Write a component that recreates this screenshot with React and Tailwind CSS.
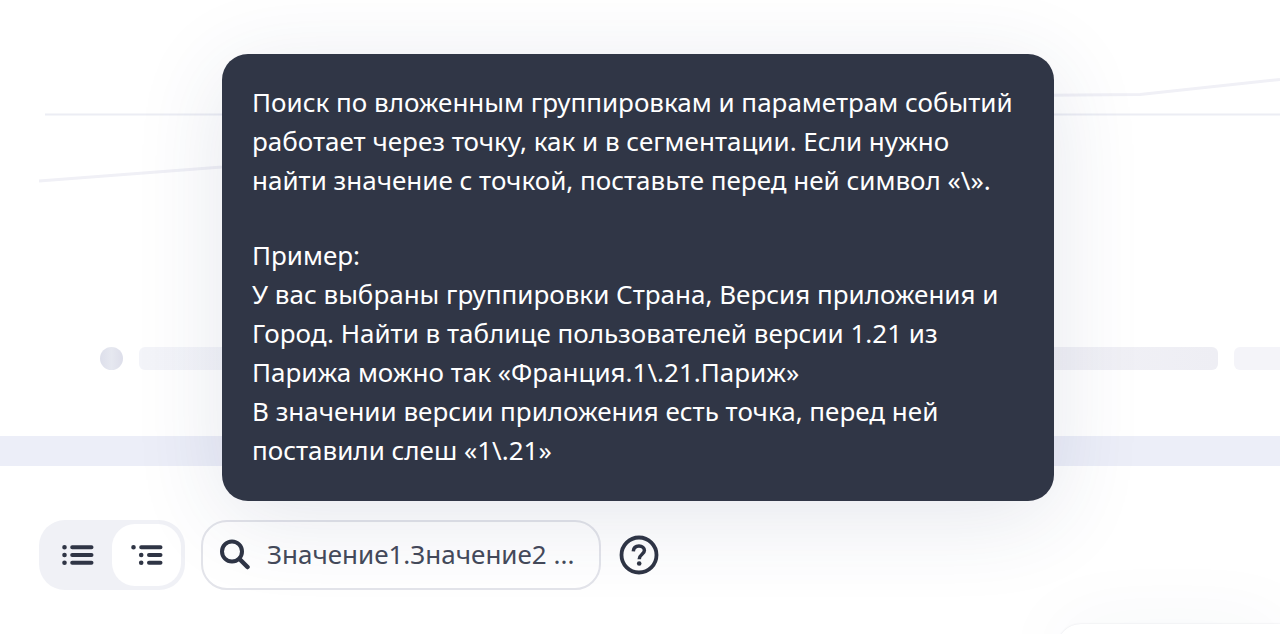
import React, { useState } from "react";

function Chart() {
  return (
    <svg className="block h-[347px] w-full" viewBox="0 0 1280 347" preserveAspectRatio="none" fill="none" aria-hidden="true">
      <path d="M45 114.5H1280" stroke="#ecedf4" strokeWidth="2" />
      <path d="M39 181L222 167L640 120L1000 95.5L1140 94.5L1280 79.5" stroke="#f0f0f6" strokeWidth="3" strokeLinejoin="round" />
    </svg>
  );
}

function Legend() {
  return (
    <div className="flex h-[23px] gap-4 pl-[100px]" aria-hidden="true">
      <span className="w-[23px] shrink-0 rounded-full bg-linear-to-r from-[#dddfeb] via-[#e6e8f0] to-[#dddeea]" />
      <span className="flex-1 rounded-md bg-linear-to-r from-[#f3f4f9] via-[#f9f9fc] to-[#eeeef4]" />
      <span className="w-[46px] shrink-0 rounded-l-md bg-[#f4f4f9]" />
    </div>
  );
}

function FlatListIcon() {
  return (
    <svg width="32" height="22" viewBox="0 0 32 22" fill="none" stroke="#2f3545" strokeWidth="4" strokeLinecap="round" aria-hidden="true">
      <path d="M2.500 3.200h.01M2.500 11h.01M2.500 18.800h.01" strokeWidth="4.600" />
      <path d="M10.200 3.200h19.300M10.200 11h19.300M10.200 18.800h19.300" />
    </svg>
  );
}

function TreeListIcon() {
  return (
    <svg width="32" height="22" viewBox="0 0 32 22" fill="none" stroke="#2f3545" strokeWidth="4" strokeLinecap="round" aria-hidden="true">
      <path d="M2.500 3.200h.01M10.200 11h.01M10.200 18.800h.01" strokeWidth="4.600" />
      <path d="M10.200 3.200h19.300M18 11h11.500M18 18.800h11.500" />
    </svg>
  );
}

function ViewSwitch() {
  const [view, setView] = useState("tree");
  const base = "flex flex-1 items-center justify-center rounded-[23px]";
  return (
    <div className="flex h-[70px] w-[146px] shrink-0 rounded-[26px] bg-[#f0f1f6] p-1">
      <button type="button" aria-label="Список" aria-pressed={view === "flat"} onClick={() => setView("flat")} className={base + (view === "flat" ? " bg-white" : "")}>
        <FlatListIcon />
      </button>
      <button type="button" aria-label="Дерево" aria-pressed={view === "tree"} onClick={() => setView("tree")} className={base + (view === "tree" ? " bg-white" : "")}>
        <TreeListIcon />
      </button>
    </div>
  );
}

function Search() {
  return (
    <label className="flex h-[70px] w-[400px] items-center gap-4 rounded-[26px] border-2 border-[#e3e4ea] px-4 pb-[2px]">
      <svg className="shrink-0" width="32" height="32" viewBox="0 0 32 32" fill="none" stroke="#2f3545" strokeWidth="4" aria-hidden="true">
        <circle cx="13" cy="13.500" r="10" />
        <path d="M20.500 21L28.500 29" strokeWidth="4.500" strokeLinecap="round" />
      </svg>
      <input type="text" aria-label="Поиск" placeholder="Значение1.Значение2 ..." className="w-full min-w-0 bg-transparent text-[26px] text-[#454a5a] outline-none placeholder:text-[#454a5a]" />
    </label>
  );
}

function Tooltip() {
  return (
    <div
      id="search-hint"
      role="tooltip"
      className="absolute top-[54px] left-[222px] flex w-[832px] flex-col gap-9 rounded-[26px] bg-[#303646] px-[30px] pt-[29px] pb-[31px] text-[26px] leading-[39px] font-normal whitespace-nowrap text-white shadow-[0_16px_90px_rgba(40,60,110,0.12)]"
    >
      <p>
        Поиск по вложенным группировкам и параметрам событий
        <br />
        работает через точку, как и в сегментации. Если нужно
        <br />
        найти значение с точкой, поставьте перед ней символ «\».
      </p>
      <p>
        Пример:
        <br />
        У вас выбраны группировки Страна, Версия приложения и
        <br />
        Город. Найти в таблице пользователей версии 1.21 из
        <br />
        Парижа можно так «Франция.1\.21.Париж»
        <br />
        В значении версии приложения есть точка, перед ней
        <br />
        поставили слеш «1\.21»
      </p>
    </div>
  );
}

export default function App() {
  return (
    <main className="relative flex min-h-screen flex-col overflow-hidden bg-white font-['Noto_Sans',sans-serif]">
      <Chart />
      <Legend />
      <div className="mt-[66px] h-[30px] bg-[#eceef8]" />
      <div className="mt-[54px] flex items-center gap-4 pl-[39px]">
        <ViewSwitch />
        <Search />
        <button type="button" aria-label="Справка" aria-describedby="search-hint" className="ml-[2px]">
          <svg width="40" height="40" viewBox="0 0 40 40" fill="none" stroke="#2f3545" strokeWidth="3.800" aria-hidden="true">
            <circle cx="20" cy="20" r="17.500" />
            <path d="M14.300 16.300C14.600 12.600 17 11.100 20 11.100C23.200 11.100 25.400 12.900 25.400 15.500C25.400 19.200 20.200 19.400 20.200 24.200" strokeWidth="3.500" />
            <circle cx="20.200" cy="28.500" r="2.300" fill="#2f3545" stroke="none" />
          </svg>
        </button>
      </div>
      <div className="mt-[34px] -mb-5 h-[31px] w-[223px] self-end rounded-tl-[24px] bg-white shadow-[0_0_2px_rgba(40,50,80,0.12),0_8px_80px_rgba(40,60,100,0.08)]" />
      <Tooltip />
    </main>
  );
}
